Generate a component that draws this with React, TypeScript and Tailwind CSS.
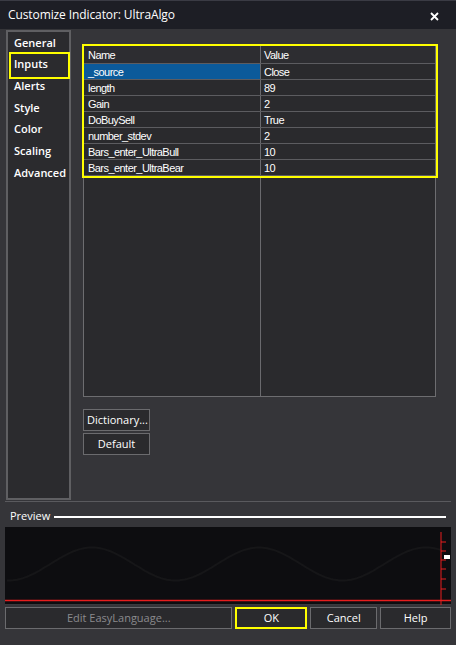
import React from "react";

const tabs = ["General", "Inputs", "Alerts", "Style", "Color", "Scaling", "Advanced"];

const inputs = [
  { name: "_source", value: "Close" },
  { name: "length", value: "89" },
  { name: "Gain", value: "2" },
  { name: "DoBuySell", value: "True" },
  { name: "number_stdev", value: "2" },
  { name: "Bars_enter_UltraBull", value: "10" },
  { name: "Bars_enter_UltraBear", value: "10" },
];

function wavePath() {
  // sine from x=2 to x=436 inside the chart box
  const pts: string[] = [];
  for (let x = 2; x <= 436; x += 2) {
    const y = 37 - 16.5 * Math.sin(((x - 87) / 167) * Math.PI * 2 + Math.PI / 2);
    pts.push(`${x},${y.toFixed(1)}`);
  }
  return "M" + pts.join(" L");
}

export default function App() {
  const uiFont = { fontFamily: '"Open Sans", "Noto Sans", sans-serif' };
  const gridFont = { fontFamily: '"Liberation Sans", Arial, sans-serif' };

  return (
    <div className="w-[456px] h-[645px] bg-[#353539] flex flex-col overflow-hidden" style={uiFont}>
      {/* Title bar */}
      <div className="h-[29px] shrink-0 bg-[#1d1e25] border-t border-[#3a3b44] flex items-center justify-between pl-[8px] pr-[17px]">
        <span className="text-[12px] text-white tracking-[-0.1px]">Customize Indicator: UltraAlgo</span>
        <svg width="9" height="9" viewBox="0 0 9 9" className="mt-[3px]">
          <path d="M1 1 L8 8 M8 1 L1 8" stroke="#fff" strokeWidth="1.8" />
        </svg>
      </div>

      {/* Body */}
      <div className="flex h-[472px] shrink-0 pt-[1px]">
        <div className="ml-[6px] w-[65px] h-[470px] border-2 border-[#5f5f62] bg-[#2b2b2e] flex flex-col relative">
          {tabs.map((t) => (
            <div key={t} className="h-[21.67px] flex items-center pl-[6px] text-[11px] font-semibold text-white">
              {t}
            </div>
          ))}
          <div className="absolute left-[1px] top-[20px] w-[61px] h-[27px] border-2 border-[#ffff00]" />
        </div>

        <div className="flex flex-col pl-[12px] pt-[15px]">
          <div className="relative w-[353px] h-[352px] border border-[#6d6d70] bg-[#2a2a2d] flex flex-col" style={gridFont}>
            <div className="flex h-[18px] border-b border-[#5c5c60] bg-[#2d2d31] text-[11px] tracking-[-0.55px] text-white">
              <div className="w-[177px] border-r border-[#6a6a6e] pl-[4px] pt-[2px] flex items-center">Name</div>
              <div className="flex-1 pl-[3px] pt-[2px] flex items-center">Value</div>
            </div>
            {inputs.map((r, i) => (
              <div key={r.name} className="flex h-[16px] border-b border-[#5c5c60] text-[11px] tracking-[-0.55px] text-white">
                <div
                  className={`w-[177px] border-r border-[#6a6a6e] pl-[4px] pt-[2px] flex items-center ${
                    i === 0 ? "bg-[#0b5a9a]" : ""
                  }`}
                >
                  {r.name}
                </div>
                <div className="flex-1 pl-[3px] pt-[2px] flex items-center">{r.value}</div>
              </div>
            ))}
            <div className="flex flex-1">
              <div className="w-[177px] border-r border-[#6a6a6e]" />
            </div>
            <div className="absolute left-[-2px] top-[-2px] w-[356px] h-[134px] border-2 border-[#ffff00]" />
          </div>

          <div className="flex flex-col gap-[2px] mt-[12px]">
            <button className="w-[67px] h-[22px] border border-[#6b6b6e] bg-[#2a2a2d] text-[11px] text-white text-left pl-[3px]">
              Dictionary...
            </button>
            <button className="w-[67px] h-[22px] border border-[#6b6b6e] bg-[#2a2a2d] text-[11px] text-white">
              Default
            </button>
          </div>
        </div>
      </div>

      {/* separator */}
      <div className="h-px mx-[5px] bg-[#5a5a5e] shrink-0" />

      {/* Preview header */}
      <div className="flex items-center h-[25px] shrink-0 pl-[10px] pr-[10px] pt-[4px]">
        <span className="text-[11px] text-white">Preview</span>
        <div className="flex-1 h-[2px] bg-white ml-[4px]" />
      </div>

      {/* Chart */}
      <div className="relative mx-[5px] h-[78px] shrink-0 bg-[#0d0d10] border-b border-[#3a3a3e]">
        <svg width="446" height="78" className="absolute inset-0">
          <path d={wavePath()} fill="none" stroke="#161618" strokeWidth="2" />
          <line x1="0" y1="73.5" x2="446" y2="73.5" stroke="#e81e1e" strokeWidth="1.5" />
          <line x1="436" y1="5" x2="436" y2="78" stroke="#e81e1e" strokeWidth="1" />
          {[15, 24, 33, 42, 52, 62].map((y) => (
            <line key={y} x1="436" y1={y} x2="441" y2={y} stroke="#e81e1e" strokeWidth="1" />
          ))}
          <rect x="439" y="28" width="6" height="4" fill="#ffffff" />
        </svg>
      </div>

      {/* Buttons */}
      <div className="flex gap-[3px] mx-[5px] mt-[2px] h-[22px] shrink-0 text-[11px]">
        <button className="w-[228px] border border-[#6b6b6e] bg-[#2a2a2d] text-[#8a8a8d]">Edit EasyLanguage...</button>
        <button className="w-[72px] border-2 border-[#ffff00] bg-[#2a2a2d] text-white">OK</button>
        <button className="w-[67px] border border-[#6b6b6e] bg-[#2a2a2d] text-white">Cancel</button>
        <button className="w-[71px] border border-[#6b6b6e] bg-[#2a2a2d] text-white">Help</button>
      </div>
    </div>
  );
}
